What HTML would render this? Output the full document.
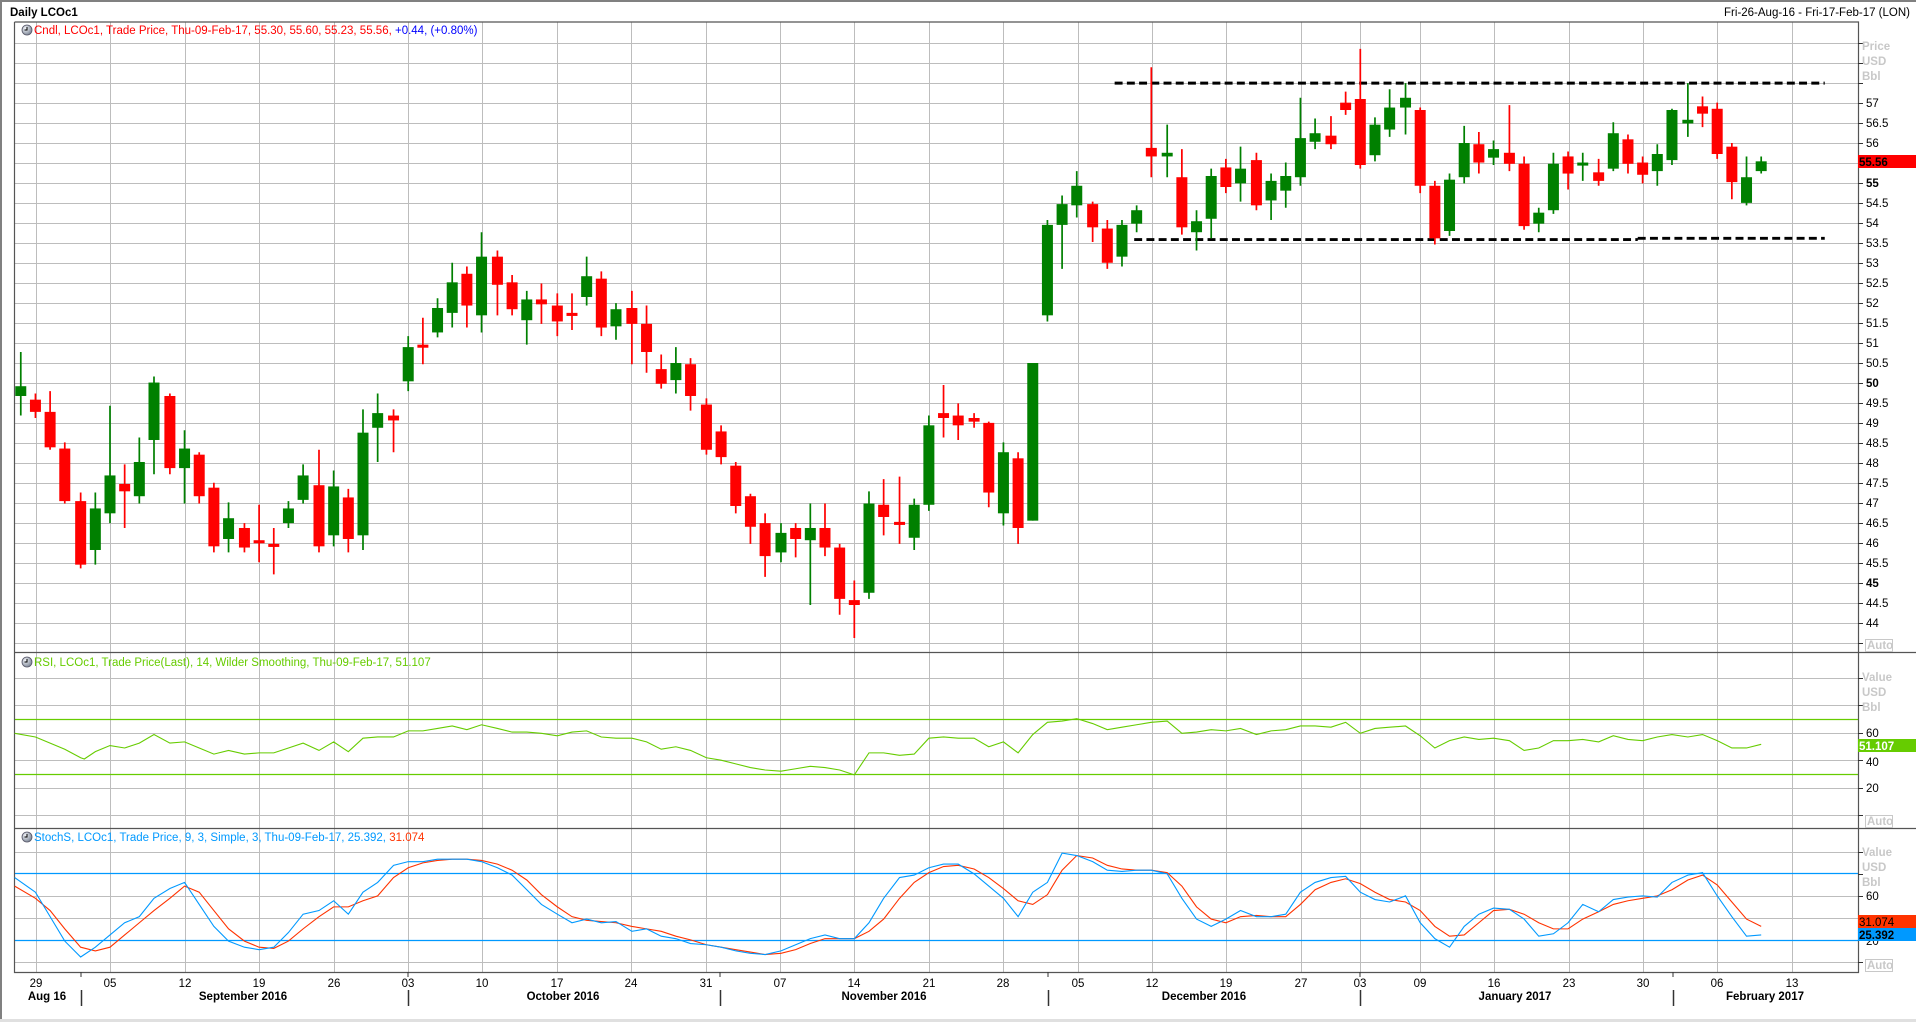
<!DOCTYPE html>
<html><head><meta charset="utf-8"><style>
html,body{margin:0;padding:0;background:#fff;width:1916px;height:1022px;overflow:hidden}
svg{display:block}
text{font-family:"Liberation Sans",sans-serif;font-size:11.5px}
</style></head><body>
<svg width="1916" height="1022" viewBox="0 0 1916 1022" xmlns="http://www.w3.org/2000/svg">
<rect x="0" y="0" width="1916" height="1022" fill="#fff"/>
<rect x="0" y="0" width="1916" height="2" fill="#808080"/>
<rect x="0" y="0" width="2" height="1022" fill="#808080"/>
<rect x="0" y="1019" width="1916" height="3" fill="#e0e0e0"/>
<text x="10" y="16" font-weight="bold" font-size="12">Daily LCOc1</text>
<text x="1910" y="16" text-anchor="end" font-size="12">Fri-26-Aug-16 - Fri-17-Feb-17 (LON)</text>

<g stroke="#bdbdbd" stroke-width="1">
<path d="M14 43.5H1858M14 63.5H1858M14 83.5H1858M14 103.5H1858M14 123.5H1858M14 143.5H1858M14 163.5H1858M14 183.5H1858M14 203.5H1858M14 223.5H1858M14 243.5H1858M14 263.5H1858M14 283.5H1858M14 303.5H1858M14 323.5H1858M14 343.5H1858M14 363.5H1858M14 383.5H1858M14 403.5H1858M14 423.5H1858M14 443.5H1858M14 463.5H1858M14 483.5H1858M14 503.5H1858M14 523.5H1858M14 543.5H1858M14 563.5H1858M14 583.5H1858M14 603.5H1858M14 623.5H1858M14 643.5H1858"/>
<path d="M14 678.5H1858M14 705.5H1858M14 733.5H1858M14 760.5H1858M14 788.5H1858M14 815.5H1858"/>
<path d="M14 852.5H1858M14 896.5H1858M14 918.5H1858M14 962.5H1858"/>
<path d="M36.5 22V972M110.5 22V972M185.5 22V972M259.5 22V972M334.5 22V972M408.5 22V972M482.5 22V972M557.5 22V972M631.5 22V972M706.5 22V972M780.5 22V972M854.5 22V972M929.5 22V972M1003.5 22V972M1078.5 22V972M1152.5 22V972M1226.5 22V972M1301.5 22V972M1360.5 22V972M1420.5 22V972M1494.5 22V972M1569.5 22V972M1643.5 22V972M1717.5 22V972M1792.5 22V972"/>
</g>
<path d="M14 719.5H1858M14 774.5H1858" stroke="#66cc00" stroke-width="1.3"/>
<path d="M14 873.5H1858M14 940.5H1858" stroke="#0099ff" stroke-width="1.3"/>

<g stroke="#555" stroke-width="1.2" fill="none">
<path d="M14.5 22V972.5H1858.5V22H14.5"/>
<path d="M14 652.5H1916M14 828.5H1916"/>
</g>
<g stroke="#333" stroke-width="1">
<path d="M1858 43.5h5M1858 63.5h5M1858 83.5h5M1858 103.5h5M1858 123.5h5M1858 143.5h5M1858 163.5h5M1858 183.5h5M1858 203.5h5M1858 223.5h5M1858 243.5h5M1858 263.5h5M1858 283.5h5M1858 303.5h5M1858 323.5h5M1858 343.5h5M1858 363.5h5M1858 383.5h5M1858 403.5h5M1858 423.5h5M1858 443.5h5M1858 463.5h5M1858 483.5h5M1858 503.5h5M1858 523.5h5M1858 543.5h5M1858 563.5h5M1858 583.5h5M1858 603.5h5M1858 623.5h5M1858 643.5h5"/>
<path d="M1858 678.5h5M1858 705.5h5M1858 733.5h5M1858 760.5h5M1858 788.5h5M1858 815.5h5M1858 852.5h5M1858 874.5h5M1858 896.5h5M1858 918.5h5M1858 940.5h5M1858 962.5h5"/>
<path d="M81 972v5M408 972v5M720 972v5M1048 972v5M1360 972v5M1673 972v5"/>
<path d="M81.5 990v16M408.5 990v16M720.5 990v16M1048.5 990v16M1360.5 990v16M1673.5 990v16" stroke-width="1.5"/>
</g>
<g font-size="11.5" fill="#000">
<text x="1866" y="107">57</text><text x="1866" y="127">56.5</text><text x="1866" y="147">56</text>
<text x="1866" y="187" font-weight="bold">55</text><text x="1866" y="207">54.5</text><text x="1866" y="227">54</text>
<text x="1866" y="247">53.5</text><text x="1866" y="267">53</text><text x="1866" y="287">52.5</text><text x="1866" y="307">52</text>
<text x="1866" y="327">51.5</text><text x="1866" y="347">51</text><text x="1866" y="367">50.5</text><text x="1866" y="387" font-weight="bold">50</text>
<text x="1866" y="407">49.5</text><text x="1866" y="427">49</text><text x="1866" y="447">48.5</text><text x="1866" y="467">48</text>
<text x="1866" y="487">47.5</text><text x="1866" y="507">47</text><text x="1866" y="527">46.5</text><text x="1866" y="547">46</text>
<text x="1866" y="567">45.5</text><text x="1866" y="587" font-weight="bold">45</text><text x="1866" y="607">44.5</text><text x="1866" y="627">44</text>
<text x="1866" y="737">60</text><text x="1866" y="766">40</text><text x="1866" y="792">20</text>
<text x="1866" y="900">60</text><text x="1866" y="945">20</text>
</g>
<g font-size="12" font-weight="bold" fill="#c8c8c8">
<text x="1862" y="50">Price</text><text x="1862" y="65">USD</text><text x="1862" y="80">Bbl</text>
<text x="1862" y="681">Value</text><text x="1862" y="696">USD</text><text x="1862" y="711">Bbl</text>
<text x="1862" y="856">Value</text><text x="1862" y="871">USD</text><text x="1862" y="886">Bbl</text>
</g>
<g fill="#fff" stroke="#c8c8c8" stroke-width="1">
<rect x="1865.5" y="639.5" width="27" height="12"/><rect x="1865.5" y="815.5" width="27" height="12"/><rect x="1865.5" y="959.5" width="27" height="12"/>
</g>
<g font-size="11" font-weight="bold" fill="#c8c8c8">
<text x="1867" y="649">Auto</text><text x="1867" y="825">Auto</text><text x="1867" y="969">Auto</text>
</g>
<rect x="1858" y="155" width="58" height="13" fill="#ff0000"/>
<text x="1859" y="166" font-weight="bold" font-size="12" fill="#000">55.56</text>
<rect x="1858" y="739" width="58" height="13" fill="#66cc00"/>
<text x="1859" y="750" font-weight="bold" font-size="12" fill="#fff">51.107</text>
<rect x="1858" y="915" width="58" height="13" fill="#ff3300"/>
<text x="1859" y="926" font-size="12" fill="#000">31.074</text>
<rect x="1858" y="928" width="58" height="13" fill="#0099ff"/>
<text x="1859" y="939" font-weight="bold" font-size="12" fill="#000">25.392</text>

<g font-size="11.5" text-anchor="middle">
<text x="36" y="987">29</text><text x="110" y="987">05</text><text x="185" y="987">12</text><text x="259" y="987">19</text><text x="334" y="987">26</text><text x="408" y="987">03</text><text x="482" y="987">10</text><text x="557" y="987">17</text><text x="631" y="987">24</text><text x="706" y="987">31</text><text x="780" y="987">07</text><text x="854" y="987">14</text><text x="929" y="987">21</text><text x="1003" y="987">28</text><text x="1078" y="987">05</text><text x="1152" y="987">12</text><text x="1226" y="987">19</text><text x="1301" y="987">27</text><text x="1360" y="987">03</text><text x="1420" y="987">09</text><text x="1494" y="987">16</text><text x="1569" y="987">23</text><text x="1643" y="987">30</text><text x="1717" y="987">06</text><text x="1792" y="987">13</text>
</g>
<g font-size="12" font-weight="bold" text-anchor="middle">
<text x="47" y="1000">Aug 16</text><text x="243" y="1000">September 2016</text><text x="563" y="1000">October 2016</text><text x="884" y="1000">November 2016</text><text x="1204" y="1000">December 2016</text><text x="1515" y="1000">January 2017</text><text x="1765" y="1000">February 2017</text>
</g>

<defs><radialGradient id="cg" cx="0.35" cy="0.35" r="0.7"><stop offset="0" stop-color="#f4f6fa"/><stop offset="1" stop-color="#7a8494"/></radialGradient></defs>
<g>
<circle cx="27" cy="30" r="5" fill="url(#cg)" stroke="#556" stroke-width="0.8"/><path d="M27 27v3h-2.5" stroke="#000" fill="none"/>
<circle cx="27" cy="662" r="5" fill="url(#cg)" stroke="#556" stroke-width="0.8"/><path d="M27 659v3h-2.5" stroke="#000" fill="none"/>
<circle cx="27" cy="837" r="5" fill="url(#cg)" stroke="#556" stroke-width="0.8"/><path d="M27 834v3h-2.5" stroke="#000" fill="none"/>
</g>
<text x="34" y="34" font-size="11.2" fill="#ff0000">Cndl, LCOc1, Trade Price, Thu-09-Feb-17, 55.30, 55.60, 55.23, 55.56, <tspan fill="#0000ff">+0.44, (+0.80%)</tspan></text>
<text x="34" y="666" font-size="11" fill="#66cc00">RSI, LCOc1, Trade Price(Last),  14, Wilder Smoothing, Thu-09-Feb-17, 51.107</text>
<text x="34" y="841" font-size="11" fill="#0099ff">StochS, LCOc1, Trade Price,  9, 3, Simple, 3, Thu-09-Feb-17, 25.392, <tspan fill="#ff3300">31.074</tspan></text>

<g transform="scale(1.2222)">
<path d="M912 68H1493" stroke="#000" stroke-width="2.4" stroke-dasharray="6.5 3.5"/>
<path d="M928 196H1340M1340 195H1493" stroke="#000" stroke-width="2.4" stroke-dasharray="6.5 3.5"/>

<g fill="#008000">
<path stroke="#008000" stroke-width="1.4" d="M17 288V340M78 403V462M90 332V428M114 358V412M126 308V388M151 352V412M187 411V452M236 410V432M248 380V412M273 385V447M297 335V450M309 322V378M334 275V320M358 244V276M370 215V268M394 190V272M431 238V282M480 210V250M504 248V278M553 284V322M639 428V460M663 412V495M711 402V490M748 408V450M760 340V418M821 362V430M845 297V426M857 180V263M869 160V220M881 140V178M918 180V218M930 168V190M955 102V145M979 172V205M991 138V195M1015 120V165M1040 142V180M1052 133V170M1064 80V152M1076 97V122M1125 96V132M1137 73V112M1150 68V110M1186 142V193M1198 103V150M1222 115V135M1259 170V190M1271 125V175M1295 125V148M1320 100V140M1356 118V152M1368 89V135M1381 68V112M1429 128V168M1441 128V142"/>
<rect x="12.5" y="316" width="9" height="8"/><rect x="73.5" y="416" width="9" height="34"/><rect x="85.5" y="389" width="9" height="31"/><rect x="109.5" y="378" width="9" height="28"/><rect x="121.5" y="313" width="9" height="47"/><rect x="146.5" y="367" width="9" height="16"/><rect x="182.5" y="424" width="9" height="17"/><rect x="231.5" y="416" width="9" height="12"/><rect x="243.5" y="389" width="9" height="20"/><rect x="268.5" y="398" width="9" height="40"/><rect x="292.5" y="354" width="9" height="84"/><rect x="304.5" y="338" width="9" height="12"/><rect x="329.5" y="284" width="9" height="28"/><rect x="353.5" y="252" width="9" height="20"/><rect x="365.5" y="231" width="9" height="25"/><rect x="389.5" y="210" width="9" height="48"/><rect x="426.5" y="245" width="9" height="17"/><rect x="475.5" y="226" width="9" height="17"/><rect x="499.5" y="253" width="9" height="14"/><rect x="548.5" y="297" width="9" height="14"/><rect x="634.5" y="436" width="9" height="16"/><rect x="658.5" y="432" width="9" height="10"/><rect x="706.5" y="412" width="9" height="73"/><rect x="743.5" y="413" width="9" height="27"/><rect x="755.5" y="348" width="9" height="65"/><rect x="816.5" y="370" width="9" height="50"/><rect x="840.5" y="297" width="9" height="129"/><rect x="852.5" y="184" width="9" height="74"/><rect x="864.5" y="167" width="9" height="17"/><rect x="876.5" y="152" width="9" height="16"/><rect x="913.5" y="184" width="9" height="26"/><rect x="925.5" y="172" width="9" height="11"/><rect x="950.5" y="125" width="9" height="3"/><rect x="974.5" y="181" width="9" height="9"/><rect x="986.5" y="144" width="9" height="35"/><rect x="1010.5" y="138" width="9" height="12"/><rect x="1035.5" y="148" width="9" height="16"/><rect x="1047.5" y="144" width="9" height="12"/><rect x="1059.5" y="113" width="9" height="32"/><rect x="1071.5" y="109" width="9" height="7"/><rect x="1120.5" y="102" width="9" height="25"/><rect x="1132.5" y="88" width="9" height="18"/><rect x="1145.5" y="80" width="9" height="8"/><rect x="1181.5" y="147" width="9" height="42"/><rect x="1193.5" y="117" width="9" height="28"/><rect x="1217.5" y="122" width="9" height="7"/><rect x="1254.5" y="174" width="9" height="9"/><rect x="1266.5" y="134" width="9" height="38"/><rect x="1290.5" y="133" width="9" height="2.5"/><rect x="1315.5" y="109" width="9" height="29"/><rect x="1351.5" y="126" width="9" height="14"/><rect x="1363.5" y="90" width="9" height="41"/><rect x="1376.5" y="98" width="9" height="3"/><rect x="1424.5" y="145" width="9" height="21"/><rect x="1436.5" y="132" width="9" height="8"/>
</g>
<g fill="#ff0000">
<path stroke="#ff0000" stroke-width="1.4" d="M29 322V342M41 320V368M53 362V412M66 403V465M102 380V432M139 322V388M163 370V412M175 395V452M200 428V452M212 413V460M224 432V470M261 368V452M285 400V452M322 335V370M346 260V298M382 218V268M407 205V258M419 225V258M443 232V265M456 240V275M468 240V270M492 222V275M517 238V298M529 250V305M541 290V318M565 293V336M578 326V372M590 348V380M602 378V420M614 404V445M626 420V472M651 428V456M675 412V455M687 445V503M699 475V522M723 392V438M736 390V445M772 315V358M784 330V360M797 338V350M809 345V415M833 370V445M894 165V198M906 180V220M942 55V145M967 122V192M1003 130V158M1028 125V172M1089 95V122M1101 75V94M1113 40V138M1162 88V158M1174 148V200M1210 108V142M1235 86V140M1247 128V188M1283 124V155M1308 130V152M1332 110V142M1344 128V150M1393 79V104M1405 84V130M1417 117V163"/>
<rect x="24.5" y="327" width="9" height="10"/><rect x="36.5" y="337" width="9" height="29"/><rect x="48.5" y="367" width="9" height="43"/><rect x="61.5" y="410" width="9" height="52"/><rect x="97.5" y="396" width="9" height="6"/><rect x="134.5" y="324" width="9" height="59"/><rect x="158.5" y="372" width="9" height="34"/><rect x="170.5" y="399" width="9" height="48"/><rect x="195.5" y="432" width="9" height="16"/><rect x="207.5" y="442" width="9" height="2.5"/><rect x="219.5" y="445" width="9" height="2.5"/><rect x="256.5" y="397" width="9" height="50"/><rect x="280.5" y="407" width="9" height="34"/><rect x="317.5" y="340" width="9" height="4"/><rect x="341.5" y="282" width="9" height="2.5"/><rect x="377.5" y="224" width="9" height="26"/><rect x="402.5" y="210" width="9" height="23"/><rect x="414.5" y="231" width="9" height="22"/><rect x="438.5" y="245" width="9" height="4"/><rect x="451.5" y="250" width="9" height="13"/><rect x="463.5" y="256" width="9" height="2.5"/><rect x="487.5" y="228" width="9" height="40"/><rect x="512.5" y="252" width="9" height="13"/><rect x="524.5" y="265" width="9" height="23"/><rect x="536.5" y="302" width="9" height="12"/><rect x="560.5" y="298" width="9" height="26"/><rect x="573.5" y="331" width="9" height="37"/><rect x="585.5" y="353" width="9" height="21"/><rect x="597.5" y="381" width="9" height="33"/><rect x="609.5" y="406" width="9" height="25"/><rect x="621.5" y="428" width="9" height="27"/><rect x="646.5" y="432" width="9" height="9"/><rect x="670.5" y="432" width="9" height="16"/><rect x="682.5" y="448" width="9" height="42"/><rect x="694.5" y="491" width="9" height="4"/><rect x="718.5" y="413" width="9" height="10"/><rect x="731.5" y="427" width="9" height="2.5"/><rect x="767.5" y="338" width="9" height="4"/><rect x="779.5" y="340" width="9" height="8"/><rect x="792.5" y="342" width="9" height="3"/><rect x="804.5" y="346" width="9" height="57"/><rect x="828.5" y="375" width="9" height="57"/><rect x="889.5" y="167" width="9" height="19"/><rect x="901.5" y="187" width="9" height="28"/><rect x="937.5" y="121" width="9" height="7"/><rect x="962.5" y="145" width="9" height="41"/><rect x="998.5" y="137" width="9" height="16"/><rect x="1023.5" y="131" width="9" height="37"/><rect x="1084.5" y="111" width="9" height="7"/><rect x="1096.5" y="84" width="9" height="6"/><rect x="1108.5" y="81" width="9" height="54"/><rect x="1157.5" y="90" width="9" height="62"/><rect x="1169.5" y="152" width="9" height="43"/><rect x="1205.5" y="118" width="9" height="15"/><rect x="1230.5" y="125" width="9" height="9"/><rect x="1242.5" y="134" width="9" height="51"/><rect x="1278.5" y="128" width="9" height="14"/><rect x="1303.5" y="141" width="9" height="7"/><rect x="1327.5" y="114" width="9" height="20"/><rect x="1339.5" y="133" width="9" height="10"/><rect x="1388.5" y="87" width="9" height="6"/><rect x="1400.5" y="89" width="9" height="37"/><rect x="1412.5" y="120" width="9" height="29"/>
</g>

<polyline fill="none" stroke="#66cc00" stroke-width="0.9" points="12,600 29,603 41,608 53,613 66,620 69,621 78,615 90,610 102,612 114,608 126,601 139,608 151,607 163,612 175,617 187,614 200,617 212,616 224,616 236,612 248,608 261,614 273,607 285,615 297,604 309,603 322,603 334,598 346,598 358,596 370,594 382,597 394,593 407,596 419,599 431,599 443,600 456,602 468,599 480,598 492,603 504,604 517,604 529,607 541,613 553,611 565,614 578,620 590,622 602,625 614,628 626,630 639,631 651,629 663,627 675,628 687,630 699,634 711,616 723,616 736,618 748,617 760,604 772,603 784,604 797,604 809,611 821,607 833,616 845,601 857,591 869,590 881,588 894,592 906,597 918,595 930,593 942,591 955,590 967,600 979,599 991,597 1003,598 1015,596 1028,601 1040,598 1052,597 1064,594 1076,594 1089,595 1101,591 1113,600 1125,596 1137,595 1150,594 1162,602 1174,612 1186,606 1198,603 1210,605 1222,604 1235,606 1247,614 1259,612 1271,606 1283,606 1295,605 1308,607 1320,602 1332,605 1344,606 1356,603 1368,601 1381,603 1393,601 1405,606 1417,612 1429,612 1441,609"/>
<polyline fill="none" stroke="#ff3300" stroke-width="0.9" points="12,725 29,735 41,745 53,760 66,775 78,778 90,775 102,765 114,755 126,745 139,735 151,725 163,730 175,745 187,760 200,770 212,775 224,776 236,770 248,760 261,750 273,742 285,742 297,737 309,733 322,718 334,710 346,706 358,704 370,703 382,703 394,704 407,707 419,712 431,720 443,732 456,742 468,750 480,753 492,754 504,755 517,758 529,760 541,762 553,766 565,769 578,773 590,775 602,777 614,779 626,781 639,780 651,777 663,772 675,768 687,768 699,768 711,762 723,752 736,735 748,722 760,714 772,709 784,708 797,711 809,718 821,727 833,737 845,740 857,732 869,712 881,700 894,702 906,708 918,711 930,712 942,712 955,714 967,725 979,742 991,752 1003,755 1015,750 1028,749 1040,750 1052,750 1064,740 1076,728 1089,722 1101,719 1113,723 1125,730 1137,736 1150,738 1162,745 1174,758 1186,766 1198,765 1210,755 1222,745 1235,744 1247,748 1259,755 1271,760 1283,760 1295,752 1308,746 1320,740 1332,737 1344,735 1356,733 1368,728 1381,720 1393,716 1405,724 1417,738 1429,752 1441,758"/>
<polyline fill="none" stroke="#0099ff" stroke-width="0.9" points="12,718 29,730 41,750 53,770 66,783 78,775 90,765 102,755 114,750 126,735 139,727 151,722 163,740 175,758 187,770 200,775 212,777 224,775 236,763 248,748 261,745 273,737 285,748 297,730 309,722 322,708 334,705 346,705 358,703 370,703 382,703 394,705 407,710 419,716 431,728 443,740 456,748 468,755 480,752 492,755 504,754 517,762 529,760 541,766 553,768 565,772 578,773 590,775 602,778 614,780 626,781 639,778 651,773 663,768 675,765 687,768 699,768 711,755 723,735 736,718 748,716 760,710 772,707 784,707 797,715 809,725 821,735 833,750 845,730 857,722 869,698 881,700 894,705 906,712 918,713 930,712 942,712 955,715 967,735 979,752 991,758 1003,752 1015,745 1028,750 1040,750 1052,748 1064,730 1076,722 1089,718 1101,717 1113,730 1125,736 1137,738 1150,733 1162,755 1174,768 1186,775 1198,758 1210,748 1222,743 1235,744 1247,752 1259,766 1271,764 1283,755 1295,740 1308,746 1320,736 1332,734 1344,733 1356,734 1368,722 1381,716 1393,714 1405,733 1417,750 1429,766 1441,765"/>
</g>
</svg>
</body></html>
